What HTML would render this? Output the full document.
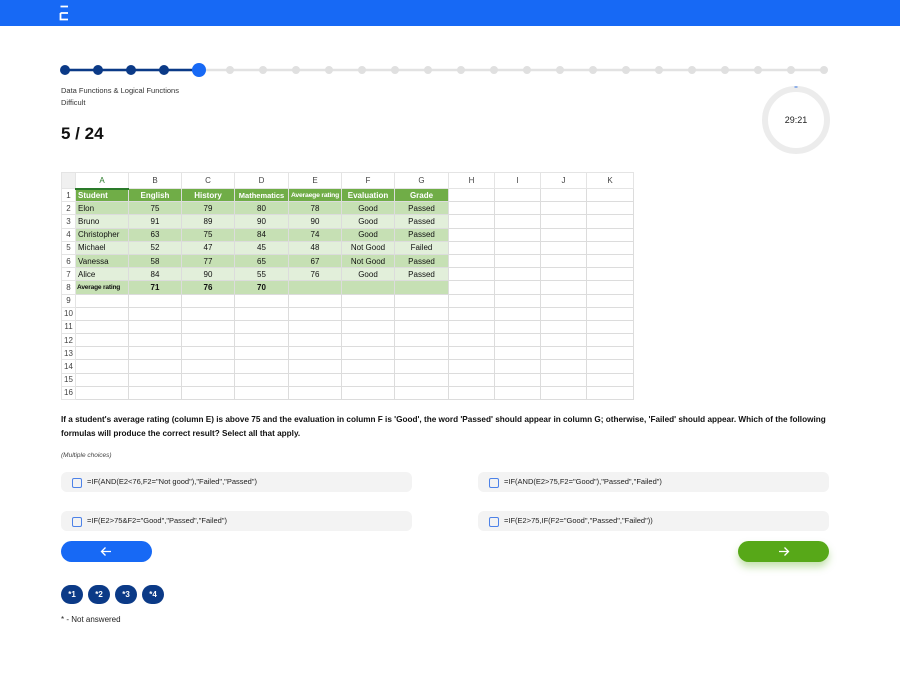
<!DOCTYPE html>
<html><head><meta charset="utf-8"><style>
*{margin:0;padding:0;box-sizing:border-box}
body{width:900px;height:674px;background:#fff;font-family:"Liberation Sans",sans-serif;position:relative;overflow:hidden;color:#111}
.top{position:absolute;left:0;top:0;width:900px;height:26px;background:#1769f5}
.abs{position:absolute}
table{border-collapse:collapse;position:absolute;left:61px;top:172px;font-size:8px;table-layout:fixed;width:572px}
td{border:1px solid #dcdcdc;height:13.2px;padding:0 2px;text-align:center;white-space:nowrap;overflow:hidden}
tr.h td{height:16px;background:#fff;color:#444;border-color:#e4e4e4}
td.rn{color:#444;padding:0;text-align:center;background:#fff;border-color:#e4e4e4}
tr.g1 td.c{background:#70ad47;color:#fff;font-weight:bold}
.d td.c{background:#c6e0b4}
.l td.c{background:#e2efda}
td.n{text-align:left}
.opt{position:absolute;height:20px;background:#f3f3f3;border-radius:6px;font-size:7.5px;line-height:20px;padding-left:26px;color:#222}
.opt:before{content:"";position:absolute;left:11px;top:6px;width:8px;height:8px;border:1.2px solid #4d82e8;border-radius:2px}
.pill{position:absolute;top:585px;width:22px;height:19px;border-radius:10px;background:#0b3a87;color:#fff;font-size:8px;font-weight:bold;text-align:center;line-height:19px}
</style></head><body>
<div class="top"><svg class="abs" style="left:59px;top:5px" width="12" height="16"><path d="M1.5 1.5H9M1.5 8H9M1.5 8V14.5H9" stroke="#fff" stroke-width="1.8" fill="none"/></svg></div>
<svg class="abs" style="left:0;top:60px" width="900" height="22">
<line x1="65" y1="10" x2="824" y2="10" stroke="#e2e2e2" stroke-width="2.5"/>
<line x1="65" y1="10" x2="199" y2="10" stroke="#0b3a87" stroke-width="2.5"/>
<g fill="#0b3a87"><circle cx="65" cy="10" r="5"/><circle cx="98" cy="10" r="5"/><circle cx="131" cy="10" r="5"/><circle cx="164" cy="10" r="5"/></g>
<circle cx="199" cy="10" r="7" fill="#1769f5"/>
<g fill="#e0e0e0">
<circle cx="230" cy="10" r="4"/><circle cx="263" cy="10" r="4"/><circle cx="296" cy="10" r="4"/><circle cx="329" cy="10" r="4"/><circle cx="362" cy="10" r="4"/><circle cx="395" cy="10" r="4"/><circle cx="428" cy="10" r="4"/><circle cx="461" cy="10" r="4"/><circle cx="494" cy="10" r="4"/><circle cx="527" cy="10" r="4"/><circle cx="560" cy="10" r="4"/><circle cx="593" cy="10" r="4"/><circle cx="626" cy="10" r="4"/><circle cx="659" cy="10" r="4"/><circle cx="692" cy="10" r="4"/><circle cx="725" cy="10" r="4"/><circle cx="758" cy="10" r="4"/><circle cx="791" cy="10" r="4"/><circle cx="824" cy="10" r="4"/></g></svg>
<div class="abs" style="left:61px;top:85px;font-size:7.5px;color:#333;line-height:12px">Data Functions &amp; Logical Functions<br>Difficult</div>
<div class="abs" style="left:61px;top:124px;font-size:17px;font-weight:bold">5 / 24</div>
<svg class="abs" style="left:760px;top:84px" width="72" height="72"><circle cx="36" cy="36" r="31" stroke="#ececec" stroke-width="6" fill="none"/><rect x="34.5" y="2" width="3" height="2" fill="#8fb0e8"/><text x="36" y="39" font-size="9" text-anchor="middle" fill="#222" font-family="Liberation Sans">29:21</text></svg>
<table>
<colgroup><col style="width:14px"><col style="width:53px"><col style="width:53px"><col style="width:53px"><col style="width:54px"><col style="width:53px"><col style="width:53px"><col style="width:54px"><col style="width:46px"><col style="width:46px"><col style="width:46px"><col style="width:47px"></colgroup>
<tr class="h"><td class="rn" style="background:#f0f0f0"></td><td style="color:#2a7a2a;border-bottom:2px solid #2a7a2a">A</td><td>B</td><td>C</td><td>D</td><td>E</td><td>F</td><td>G</td><td>H</td><td>I</td><td>J</td><td>K</td></tr>
<tr class="g1"><td class="rn">1</td><td class="c n">Student</td><td class="c">English</td><td class="c">History</td><td class="c" style="padding:0;font-size:7.5px">Mathematics</td><td class="c" style="padding:0;font-size:6.8px;letter-spacing:-.2px">Averaege rating</td><td class="c">Evaluation</td><td class="c">Grade</td><td></td><td></td><td></td><td></td></tr>
<tr class="d"><td class="rn">2</td><td class="c n">Elon</td><td class="c">75</td><td class="c">79</td><td class="c">80</td><td class="c">78</td><td class="c">Good</td><td class="c">Passed</td><td></td><td></td><td></td><td></td></tr>
<tr class="l"><td class="rn">3</td><td class="c n">Bruno</td><td class="c">91</td><td class="c">89</td><td class="c">90</td><td class="c">90</td><td class="c">Good</td><td class="c">Passed</td><td></td><td></td><td></td><td></td></tr>
<tr class="d"><td class="rn">4</td><td class="c n">Christopher</td><td class="c">63</td><td class="c">75</td><td class="c">84</td><td class="c">74</td><td class="c">Good</td><td class="c">Passed</td><td></td><td></td><td></td><td></td></tr>
<tr class="l"><td class="rn">5</td><td class="c n">Michael</td><td class="c">52</td><td class="c">47</td><td class="c">45</td><td class="c">48</td><td class="c">Not Good</td><td class="c">Failed</td><td></td><td></td><td></td><td></td></tr>
<tr class="d"><td class="rn">6</td><td class="c n">Vanessa</td><td class="c">58</td><td class="c">77</td><td class="c">65</td><td class="c">67</td><td class="c">Not Good</td><td class="c">Passed</td><td></td><td></td><td></td><td></td></tr>
<tr class="l"><td class="rn">7</td><td class="c n">Alice</td><td class="c">84</td><td class="c">90</td><td class="c">55</td><td class="c">76</td><td class="c">Good</td><td class="c">Passed</td><td></td><td></td><td></td><td></td></tr>
<tr class="d" style="font-weight:bold"><td class="rn" style="font-weight:normal">8</td><td class="c n" style="font-size:6.6px;padding:0 1px;letter-spacing:-.2px">Average rating</td><td class="c">71</td><td class="c">76</td><td class="c">70</td><td class="c"></td><td class="c"></td><td class="c"></td><td></td><td></td><td></td><td></td></tr>
<tr><td class="rn">9</td><td></td><td></td><td></td><td></td><td></td><td></td><td></td><td></td><td></td><td></td><td></td></tr>
<tr><td class="rn">10</td><td></td><td></td><td></td><td></td><td></td><td></td><td></td><td></td><td></td><td></td><td></td></tr>
<tr><td class="rn">11</td><td></td><td></td><td></td><td></td><td></td><td></td><td></td><td></td><td></td><td></td><td></td></tr>
<tr><td class="rn">12</td><td></td><td></td><td></td><td></td><td></td><td></td><td></td><td></td><td></td><td></td><td></td></tr>
<tr><td class="rn">13</td><td></td><td></td><td></td><td></td><td></td><td></td><td></td><td></td><td></td><td></td><td></td></tr>
<tr><td class="rn">14</td><td></td><td></td><td></td><td></td><td></td><td></td><td></td><td></td><td></td><td></td><td></td></tr>
<tr><td class="rn">15</td><td></td><td></td><td></td><td></td><td></td><td></td><td></td><td></td><td></td><td></td><td></td></tr>
<tr><td class="rn">16</td><td></td><td></td><td></td><td></td><td></td><td></td><td></td><td></td><td></td><td></td><td></td></tr>
</table>
<div class="abs" style="left:61px;top:413px;width:790px;font-size:8.2px;font-weight:bold;line-height:14px">If a student's average rating (column E) is above 75 and the evaluation in column F is 'Good', the word 'Passed' should appear in column G; otherwise, 'Failed' should appear. Which of the following formulas will produce the correct result? Select all that apply.</div>
<div class="abs" style="left:61px;top:452px;font-size:6.5px;font-style:italic;color:#444">(Multiple choices)</div>
<div class="opt" style="left:61px;top:472px;width:351px">=IF(AND(E2&lt;76,F2="Not good"),"Failed","Passed")</div>
<div class="opt" style="left:478px;top:472px;width:351px">=IF(AND(E2&gt;75,F2="Good"),"Passed","Failed")</div>
<div class="opt" style="left:61px;top:511px;width:351px">=IF(E2&gt;75&amp;F2="Good","Passed","Failed")</div>
<div class="opt" style="left:478px;top:511px;width:351px">=IF(E2&gt;75,IF(F2="Good","Passed","Failed"))</div>
<div class="abs" style="left:61px;top:541px;width:91px;height:21px;border-radius:11px;background:#1769f5"><svg class="abs" style="left:39px;top:5px" width="12" height="11"><path d="M11 5.5H1.5M5.5 1.5L1.5 5.5L5.5 9.5" stroke="#fff" stroke-width="1.3" fill="none"/></svg></div>
<div class="abs" style="left:738px;top:541px;width:91px;height:21px;border-radius:11px;background:#57a818;box-shadow:0 5px 8px rgba(87,168,24,.35)"><svg class="abs" style="left:40px;top:5px" width="12" height="11"><path d="M1 5.5H10.5M6.5 1.5L10.5 5.5L6.5 9.5" stroke="#fff" stroke-width="1.3" fill="none"/></svg></div>
<div class="pill" style="left:61px">*1</div><div class="pill" style="left:88px">*2</div><div class="pill" style="left:115px">*3</div><div class="pill" style="left:142px">*4</div>
<div class="abs" style="left:61px;top:615px;font-size:8px;color:#222">* - Not answered</div>
</body></html>
